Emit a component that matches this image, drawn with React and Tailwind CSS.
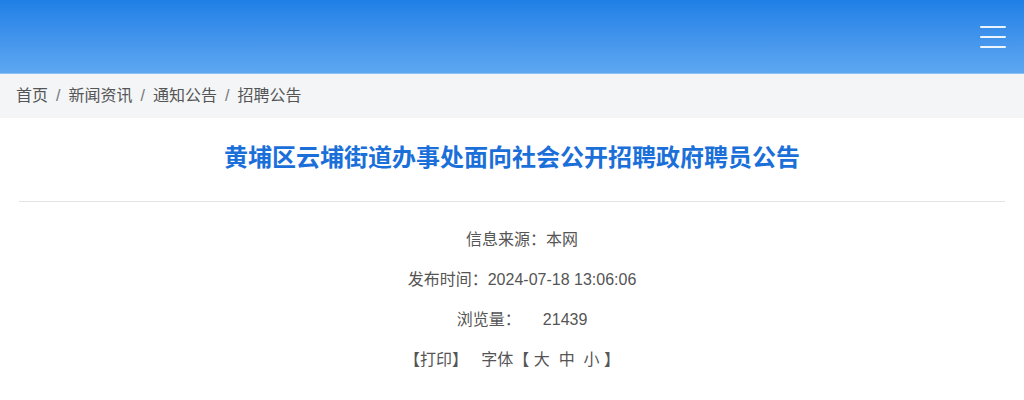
import React from "react";

const font = { fontFamily: '"Liberation Sans", "Noto Sans CJK SC", sans-serif' };

export default function App() {
  return (
    <div className="min-h-[400px] bg-white" style={font}>
      {/* Header */}
      <header className="h-[74px] bg-gradient-to-b from-[#1e7fe6] to-[#5da7f1] border-b border-[#8cc2f5] flex items-center justify-end pr-[18px]">
        <button className="flex flex-col gap-[8px] w-[26px]">
          <span className="block h-[2px] bg-white/90 rounded" />
          <span className="block h-[2px] bg-white/90 rounded" />
          <span className="block h-[2px] bg-white/90 rounded" />
        </button>
      </header>

      {/* Breadcrumb */}
      <nav className="h-[44px] bg-[#f3f5f7] flex items-center px-4 text-[16px] text-[#555]">
        <span>首页</span>
        <span className="mx-[8px] text-[#777]">/</span>
        <span>新闻资讯</span>
        <span className="mx-[8px] text-[#777]">/</span>
        <span>通知公告</span>
        <span className="mx-[8px] text-[#777]">/</span>
        <span>招聘公告</span>
      </nav>

      {/* Title */}
      <h1 className="text-center text-[24px] font-bold text-[#1b6fd9] pt-[24px] pb-[28px] leading-[31px]">
        黄埔区云埔街道办事处面向社会公开招聘政府聘员公告
      </h1>
      <div className="mx-[19px] border-t border-[#e3e3e3]" />

      {/* Meta */}
      <div className="flex flex-col items-center text-[16px] text-[#555] pt-[28px] gap-[20px] leading-[20px]">
        <p className="pl-[20px]">信息来源：本网</p>
        <p className="pl-[20px]">发布时间：2024-07-18 13:06:06</p>
        <p className="pl-[20px] whitespace-pre">浏览量：     21439</p>
        <p className="whitespace-pre">【打印】   字体【 大  中  小 】</p>
      </div>
    </div>
  );
}
